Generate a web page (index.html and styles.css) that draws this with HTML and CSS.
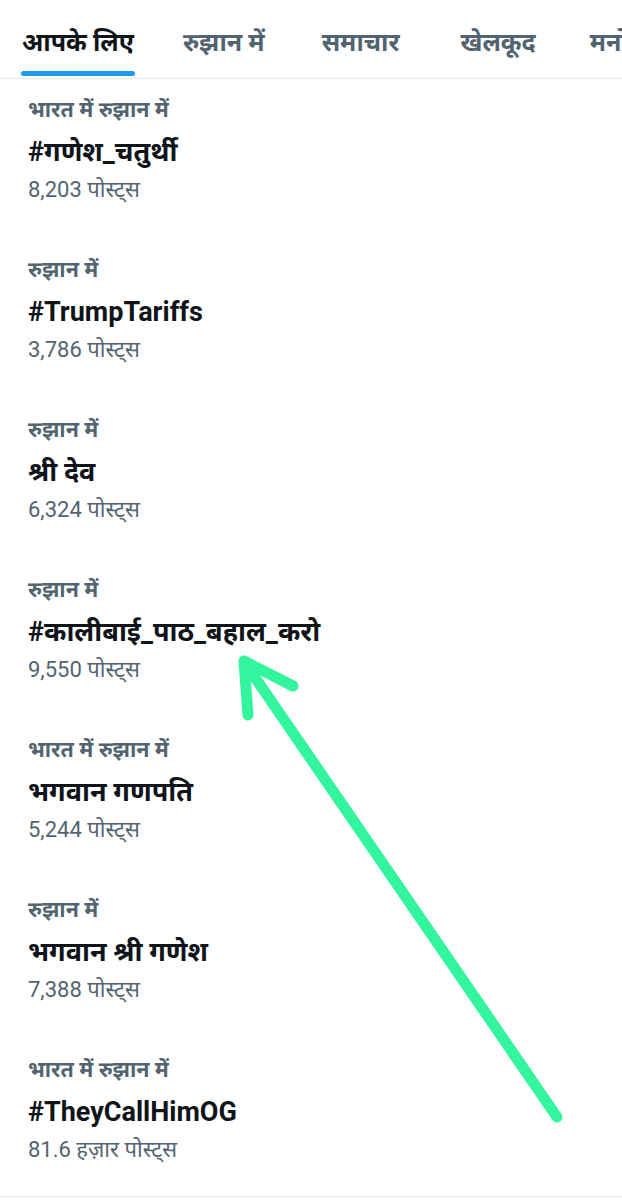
FILE: index.html
```html
<!DOCTYPE html>
<html lang="hi">

<head>
  <meta charset="UTF-8">
  <meta name="viewport" content="width=device-width, initial-scale=1.0">
  <title>खोजें</title>
  <link rel="stylesheet" href="styles.css">
</head>

<body>
  <nav class="tabs">
    <a class="tab active">आपके लिए</a>
    <a class="tab">रुझान में</a>
    <a class="tab">समाचार</a>
    <a class="tab">खेलकूद</a>
    <a class="tab">मनोरंजन</a>
  </nav>

  <ul class="trends">
    <li class="trend">
      <div class="trend-meta">भारत में रुझान में</div>
      <div class="trend-name">#गणेश_चतुर्थी</div>
      <div class="trend-count">8,203 पोस्ट्स</div>
    </li>
    <li class="trend">
      <div class="trend-meta">रुझान में</div>
      <div class="trend-name">#TrumpTariffs</div>
      <div class="trend-count">3,786 पोस्ट्स</div>
    </li>
    <li class="trend">
      <div class="trend-meta">रुझान में</div>
      <div class="trend-name">श्री देव</div>
      <div class="trend-count">6,324 पोस्ट्स</div>
    </li>
    <li class="trend">
      <div class="trend-meta">रुझान में</div>
      <div class="trend-name">#कालीबाई_पाठ_बहाल_करो</div>
      <div class="trend-count">9,550 पोस्ट्स</div>
    </li>
    <li class="trend">
      <div class="trend-meta">भारत में रुझान में</div>
      <div class="trend-name">भगवान गणपति</div>
      <div class="trend-count">5,244 पोस्ट्स</div>
    </li>
    <li class="trend">
      <div class="trend-meta">रुझान में</div>
      <div class="trend-name">भगवान श्री गणेश</div>
      <div class="trend-count">7,388 पोस्ट्स</div>
    </li>
    <li class="trend">
      <div class="trend-meta">भारत में रुझान में</div>
      <div class="trend-name">#TheyCallHimOG</div>
      <div class="trend-count">81.6 हज़ार पोस्ट्स</div>
    </li>
  </ul>

  <!-- hand-drawn marker over the list -->
  <svg class="marker" width="622" height="1200" viewBox="0 0 622 1200">
    <g fill="none" stroke="#33f59e" stroke-width="11" stroke-linecap="round" stroke-linejoin="round">
      <path d="M557 1117 L245 663" />
      <path d="M293 686 L244 661 L248 715" />
    </g>
  </svg>
</body>

</html>
```

FILE: styles.css
```css
* {
  box-sizing: border-box;
}
body {
  margin: 0;
  background: #fff;
  font-family: Roboto, "Noto Sans", "Noto Sans CJK SC", sans-serif;
  color: #0f1419;
  position: relative;
  overflow: hidden;
  height: 1200px;
}
.tabs {
  display: flex;
  height: 79px;
  padding-left: 22px;
  border-bottom: 1px solid #e6e9ea;
  white-space: nowrap;
  overflow: hidden;
}
.tab {
  position: relative;
  flex-shrink: 0;
  margin-right: 49px;
  padding-top: 24px;
  font-size: 25px;
  font-weight: 700;
  color: #536471;
}
.tab:nth-child(2) {
  margin-right: 57px;
}
.tab:nth-child(3) {
  margin-right: 61px;
}
.tab:nth-child(4) {
  margin-right: 54px;
}
.tab.active {
  color: #0f1419;
}
.tab.active::after {
  content: "";
  position: absolute;
  left: -1px;
  right: -1px;
  bottom: 2px;
  height: 5px;
  border-radius: 3px;
  background: #1d9bf0;
}
.trends {
  list-style: none;
  margin: 0;
  padding: 0;
  border-bottom: 1px solid #e6e9ea;
}
.trend {
  height: 160px;
  padding: 18px 0 0 28px;
}
.trend:last-child {
  height: 157px;
}
.trend-meta {
  font-size: 21.5px;
  line-height: 26px;
  font-weight: 700;
  color: #536471;
}
.trend-name {
  margin-top: 13px;
  font-size: 27px;
  line-height: 32px;
  font-weight: 700;
}
.trend-count {
  margin-top: 9px;
  font-size: 22px;
  line-height: 26px;
  color: #536471;
}
.marker {
  position: absolute;
  left: 0;
  top: 0;
  pointer-events: none;
}
```
